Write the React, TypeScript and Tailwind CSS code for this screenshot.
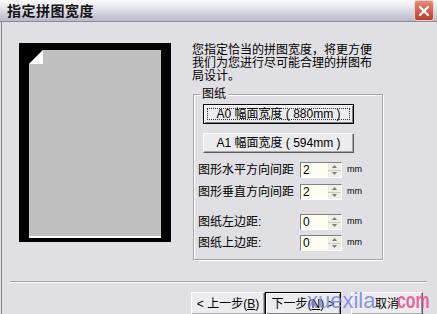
import React from 'react';

const ui = "font-['Liberation_Sans','Noto_Sans_CJK_SC',sans-serif]";

function Spin({ value }: { value: string }) {
  return (
    <div className="flex h-[16px] w-[42px] border border-t-[#808080] border-l-[#808080] border-r-white border-b-white bg-[#fdfdf2]">
      <div className="flex-1 pl-[2px] text-[12px] leading-[14px] text-black">{value}</div>
      <div className="flex w-[13px] flex-col">
        <div className="flex flex-1 items-center justify-center bg-[#efeee6] border-b border-[#c8c8c0]">
          <svg width="5" height="3" viewBox="0 0 5 3"><path d="M0 3h5L2.5 0z" fill="#7a7a7a" /></svg>
        </div>
        <div className="flex flex-1 items-center justify-center bg-[#efeee6]">
          <svg width="5" height="3" viewBox="0 0 5 3"><path d="M0 0h5L2.5 3z" fill="#7a7a7a" /></svg>
        </div>
      </div>
    </div>
  );
}

function Row({ label, value, className }: { label: string; value: string; className: string }) {
  return (
    <div className={`flex h-[16px] items-center ${className}`}>
      <span className="w-[102px] text-[12px] leading-[14px] text-black">{label}</span>
      <Spin value={value} />
      <span className="ml-[5px] text-[9px] text-black">mm</span>
    </div>
  );
}

function WinButton({ children, isDefault, focused, className = '' }: { children: React.ReactNode; isDefault?: boolean; focused?: boolean; className?: string }) {
  return (
    <button
      className={`flex h-[20px] items-center justify-center bg-[#ecebee] text-[12px] text-black ${
        isDefault
          ? 'border border-black shadow-[inset_1px_1px_0_#fff,inset_-1px_-1px_0_#808080]'
          : 'border border-t-white border-l-white border-r-[#5a5a5a] border-b-[#5a5a5a] shadow-[inset_-1px_-1px_0_#a8a8a8]'
      } ${focused ? 'p-[3px]' : ''} ${className}`}
    >
      {focused ? (
        <span className="flex h-full w-full items-center justify-center border border-dotted border-[#333]">{children}</span>
      ) : (
        children
      )}
    </button>
  );
}

export default function App() {
  return (
    <div className={`relative flex h-[314px] w-[437px] flex-col overflow-hidden bg-[#e0dfe3] ${ui}`}>
      {/* title bar */}
      <div className="flex h-[25px] items-center justify-between border-b border-[#8a8a98] bg-gradient-to-b from-[#fdfdfe] via-[#dcdce6] to-[#b8b8c8] pl-[7px] pr-[3px]">
        <span className="text-[14px] font-bold leading-none tracking-[0.5px] text-[#141414]">指定拼图宽度</span>
        <div className="flex h-[21px] w-[20px] items-center justify-center rounded-[3px] border border-[#f4d0c8] bg-gradient-to-b from-[#e88a7c] to-[#b8392c]">
          <svg width="12" height="12" viewBox="0 0 12 12">
            <path d="M2 2l8 8M10 2l-8 8" stroke="#fff" strokeWidth="2.2" strokeLinecap="round" />
          </svg>
        </div>
      </div>

      <div className="ml-[1px] flex flex-1 flex-col border-l border-[#85858f]">
        <div className="flex h-[259px]">
          {/* page preview */}
          <div className="w-[190px] pl-[17px] pt-[21px]">
            <div className="flex h-[199px] w-[152px] flex-col bg-black px-[10px] pt-[7px] pb-[4px]">
              <div className="relative flex-1 border-b-2 border-white bg-[#c0c0c0]">
                <svg className="absolute left-0 top-0" width="14" height="14" viewBox="0 0 14 14">
                  <path d="M0 0h14L0 14z" fill="#000" />
                  <path d="M14 0v14H0z" fill="#fff" />
                </svg>
              </div>
            </div>
          </div>

          {/* settings */}
          <div className="flex flex-col pt-[22px]">
            <p className="w-[182px] text-[12px] leading-[13px] text-black">
              您指定恰当的拼图宽度，将更方便我们为您进行尽可能合理的拼图布局设计。
            </p>
            <div className="relative ml-[1px] mt-[11px] h-[166px] w-[190px] border border-[#a6a6ac] shadow-[1px_1px_0_#fff,inset_1px_1px_0_#fff]">
              <span className="absolute left-[6px] top-[-8px] bg-[#e0dfe3] px-[2px] text-[12px] leading-[14px] text-black">图纸</span>
              <div className="flex flex-col pl-[4px] pt-[9px]">
                <WinButton isDefault focused className="ml-[5px] w-[151px]">
                  <span className="whitespace-pre">A0 幅面宽度 ( 880mm )</span>
                </WinButton>
                <WinButton className="ml-[5px] mt-[9px] w-[151px]">
                  <span className="whitespace-pre">A1 幅面宽度 ( 594mm )</span>
                </WinButton>
                <Row label="图形水平方向间距" value="2" className="mt-[9px]" />
                <Row label="图形垂直方向间距" value="2" className="mt-[6px]" />
                <Row label="图纸左边距:" value="0" className="mt-[14px]" />
                <Row label="图纸上边距:" value="0" className="mt-[5px]" />
              </div>
            </div>
          </div>
        </div>

        {/* separator */}
        <div className="ml-[8px] h-[2px] w-[417px] border-t border-[#a0a0a4] border-b border-b-white" />

        {/* footer buttons */}
        <div className="mt-[9px] flex pl-[189px]">
          <WinButton className="h-[23px] w-[74px]">
            <span>&lt; 上一步(<u>B</u>)</span>
          </WinButton>
          <WinButton isDefault className="h-[23px] w-[76px]">
            <span>下一步(<u>N</u>) &gt;</span>
          </WinButton>
          <WinButton className="ml-[10px] h-[23px] w-[72px]">
            <span>取消</span>
          </WinButton>
        </div>
      </div>

      {/* watermark */}
      <span className="absolute left-[307px] top-[290px] text-[22px] leading-none text-[#7383e6]/85">xuexila</span>
      <span className="absolute left-[397px] top-[290px] origin-left scale-x-[0.72] text-[22px] font-bold leading-none text-[#e24f8e]/85">com</span>
    </div>
  );
}
